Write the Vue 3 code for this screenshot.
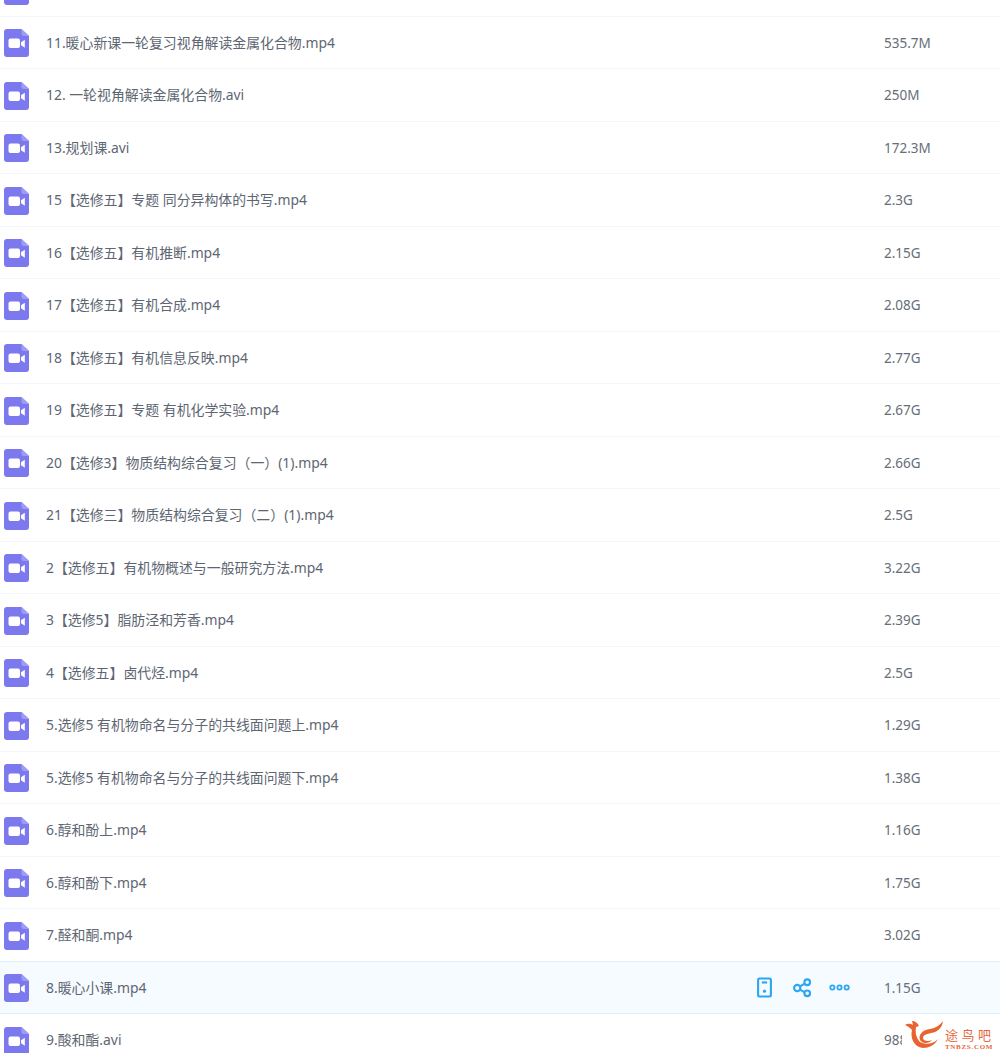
<template>
  <div class="page">
    <div class="file-list">
      <div
        v-for="(file, index) in files"
        :key="index"
        class="file-row"
        :class="{ hover: file.hover }"
      >
        <svg class="file-icon" viewBox="0 0 25 28">
          <path d="M3 0h14.5L25 7v18a3 3 0 0 1-3 3H3a3 3 0 0 1-3-3V3a3 3 0 0 1 3-3z" fill="#7c79ee" />
          <path d="M17.5 0L25 7h-5a2.5 2.5 0 0 1-2.5-2.5z" fill="#9e9cf4" />
          <rect x="4.5" y="9.5" width="11.5" height="9.5" rx="2" fill="#fff" />
          <path d="M17 13.2l3.8-2.4v7.9L17 16.3z" fill="#fff" />
        </svg>
        <span class="file-name">{{ file.name }}</span>
        <div v-if="file.hover" class="actions">
          <svg class="action" viewBox="0 0 20 20" fill="none" stroke="#2ba6f5" stroke-width="2">
            <rect x="3.9" y="1.4" width="12.2" height="17.2" rx="1.4" />
            <path d="M7.5 5.2h5" />
            <circle cx="10" cy="13.5" r="1.5" fill="#2ba6f5" stroke="none" />
          </svg>
          <svg class="action" viewBox="0 0 20 20" fill="none" stroke="#2ba6f5" stroke-width="2">
            <circle cx="5" cy="10.5" r="3" />
            <circle cx="14.5" cy="5" r="2.7" />
            <circle cx="14.5" cy="15.5" r="2.7" />
            <path d="M7.6 9l4.6-2.7M7.6 12l4.6 2.6" />
          </svg>
          <svg class="action" viewBox="0 0 20 20" fill="none" stroke="#2ba6f5" stroke-width="1.7">
            <circle cx="3.2" cy="10" r="2" />
            <circle cx="10" cy="10" r="2" />
            <circle cx="16.8" cy="10" r="2" />
          </svg>
        </div>
        <span class="file-size">{{ file.size }}</span>
      </div>
    </div>

    <div class="watermark">
      <svg class="wm-logo" viewBox="0 0 40 28">
        <path d="M0 5C3 3 6 4 8 5L7 1C10 1 13 3 14 6L11 7C10 12 11 17 14 21C18 25 27 25 33 19C30 25 24 28 18 28C9 27 5 18 7 10C5 8 3 6 0 5z" fill="#e8632f" />
        <path d="M38 1C37 8 33 12 26 13C22 14 18 15 18 18C18 21 23 22 27 20C24 24 17 24 15 20C13 14 18 10 25 9C31 8 35 5 38 1z" fill="#e8632f" />
      </svg>
      <div class="wm-text">
        <span class="wm-cn">途鸟吧</span>
        <span class="wm-en">TNBZS.COM</span>
      </div>
    </div>
  </div>
</template>

<script setup>
const files = [
  { name: '', size: '' },
  { name: '11.暖心新课一轮复习视角解读金属化合物.mp4', size: '535.7M' },
  { name: '12. 一轮视角解读金属化合物.avi', size: '250M' },
  { name: '13.规划课.avi', size: '172.3M' },
  { name: '15【选修五】专题 同分异构体的书写.mp4', size: '2.3G' },
  { name: '16【选修五】有机推断.mp4', size: '2.15G' },
  { name: '17【选修五】有机合成.mp4', size: '2.08G' },
  { name: '18【选修五】有机信息反映.mp4', size: '2.77G' },
  { name: '19【选修五】专题 有机化学实验.mp4', size: '2.67G' },
  { name: '20【选修3】物质结构综合复习（一）(1).mp4', size: '2.66G' },
  { name: '21【选修三】物质结构综合复习（二）(1).mp4', size: '2.5G' },
  { name: '2【选修五】有机物概述与一般研究方法.mp4', size: '3.22G' },
  { name: '3【选修5】脂肪泾和芳香.mp4', size: '2.39G' },
  { name: '4【选修五】卤代烃.mp4', size: '2.5G' },
  { name: '5.选修5 有机物命名与分子的共线面问题上.mp4', size: '1.29G' },
  { name: '5.选修5 有机物命名与分子的共线面问题下.mp4', size: '1.38G' },
  { name: '6.醇和酚上.mp4', size: '1.16G' },
  { name: '6.醇和酚下.mp4', size: '1.75G' },
  { name: '7.醛和酮.mp4', size: '3.02G' },
  { name: '8.暖心小课.mp4', size: '1.15G', hover: true },
  { name: '9.酸和酯.avi', size: '988M' }
]
</script>

<style>
html, body {
  margin: 0;
  background: #fff;
}
</style>

<style scoped>
.page {
  position: relative;
  width: 1000px;
  height: 1053px;
  overflow: hidden;
  background: #fff;
  font-family: "Noto Sans", "Noto Sans CJK SC", sans-serif;
}

.file-list {
  margin-top: -35.7px;
}

.file-row {
  display: flex;
  align-items: baseline;
  height: 52.5px;
  line-height: 52px;
  box-sizing: border-box;
  border-bottom: 1px solid #f2f6fb;
  padding-left: 4px;
  font-size: 13.9px;
  color: #5d6672;
}

.file-row.hover {
  background: #f5fbff;
  border-top: 1px solid #dfeefc;
  border-bottom: 1px solid #dfeefc;
  margin-top: -1px;
  height: 53.5px;
}

.file-icon {
  align-self: center;
  width: 25px;
  height: 28px;
  margin-top: 1px;
  flex-shrink: 0;
}

.file-name {
  margin-left: 17px;
  flex: 1;
  white-space: nowrap;
}

.actions {
  align-self: center;
  display: flex;
  gap: 16.5px;
  margin-right: 34px;
}

.action {
  display: block;
  width: 21px;
  height: 21px;
}

.file-size {
  width: 116px;
  flex-shrink: 0;
  font-size: 13.5px;
  color: #666e78;
}

.watermark {
  position: absolute;
  left: 902px;
  top: 1016px;
  width: 98px;
  height: 37px;
  background: #fff;
  display: flex;
  align-items: flex-start;
}

.wm-logo {
  width: 40px;
  height: 28px;
  margin: 4px 0 0 3px;
  flex-shrink: 0;
}

.wm-text {
  display: flex;
  flex-direction: column;
  padding-top: 10px;
  color: #e4673f;
}

.wm-cn {
  font-size: 13px;
  line-height: 18px;
  letter-spacing: 3.5px;
  white-space: nowrap;
}

.wm-en {
  font-family: "Liberation Serif", serif;
  font-size: 7px;
  line-height: 7px;
  font-weight: 700;
  letter-spacing: 0.7px;
  white-space: nowrap;
}
</style>
